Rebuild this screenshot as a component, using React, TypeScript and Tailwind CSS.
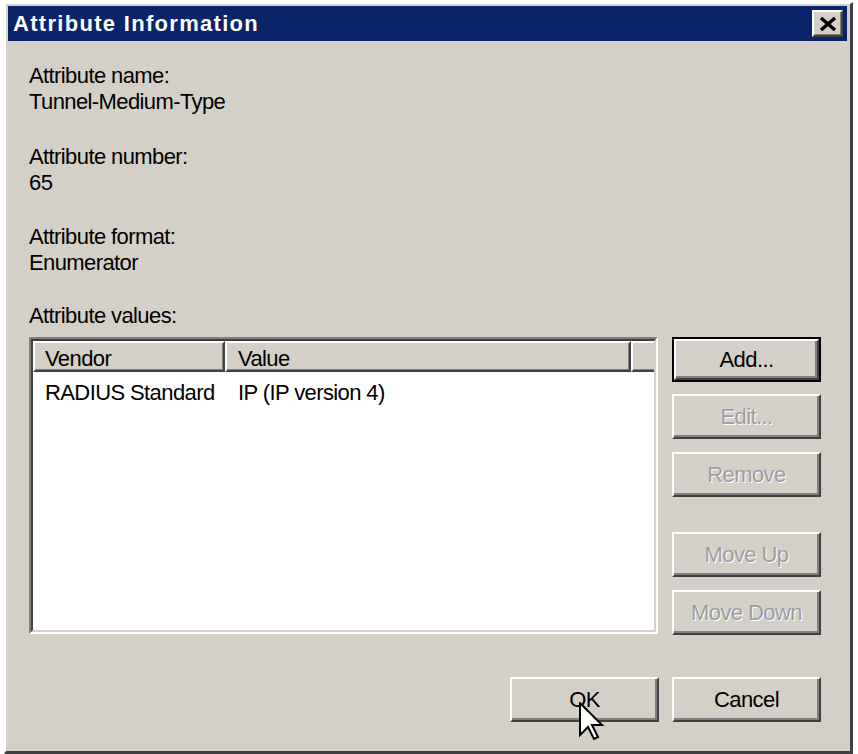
import React from 'react';

const font = "font-['Liberation_Sans',Arial,sans-serif]";

function Btn({
  label,
  disabled = false,
  isDefault = false,
}: {
  label: string;
  disabled?: boolean;
  isDefault?: boolean;
}) {
  const face = (
    <div className="flex-1 flex items-center justify-center border-t-2 border-l-2 border-t-white border-l-white border-r-2 border-b-2 border-r-[#404040] border-b-[#404040] shadow-[inset_-2px_-2px_0_#808080] bg-[#d4d0c8]">
      <span
        className={
          disabled
            ? 'text-[#9c9ca4] [text-shadow:1px_1px_0_#ffffff]'
            : 'text-black'
        }
      >
        {label}
      </span>
    </div>
  );
  if (isDefault) {
    return (
      <div className="w-[149px] h-[45px] flex border-2 border-black">{face}</div>
    );
  }
  return <div className="w-[149px] h-[45px] flex">{face}</div>;
}

function Cursor() {
  return (
    <svg
      width="26"
      height="40"
      viewBox="0 0 13 20"
      className="absolute left-[579px] top-[702px]"
    >
      <path
        d="M0.5 0.5 L0.5 16.5 L4.5 12.5 L7.5 18.5 L9.5 17.5 L6.5 11.5 L11.5 11.5 Z"
        fill="#ffffff"
        stroke="#000000"
        strokeWidth="1"
        strokeLinejoin="miter"
      />
    </svg>
  );
}

export default function App() {
  return (
    <div className={`relative w-[858px] h-[754px] bg-white overflow-hidden ${font} text-[22px] tracking-[-0.6px] text-black`}>
      {/* Dialog window */}
      <div className="ml-[4px] mt-[2px] w-[849px] h-[752px] bg-[#d4d0c8] border-t-2 border-l-2 border-t-white border-l-white border-r-[3px] border-b-[3px] border-r-[#404040] border-b-[#404040] flex flex-col">
        {/* Title bar */}
        <div className="mt-[2px] ml-[2px] mr-[3px] h-[35px] bg-[#0a246a] flex items-center justify-between pl-[5px] pr-[4px]">
          <span className="font-bold text-white text-[22px] tracking-[1.3px]">
            Attribute Information
          </span>
          <div className="w-[31px] h-[27px] flex bg-[#d4d0c8] border-t-2 border-l-2 border-t-white border-l-white border-r-2 border-b-2 border-r-[#404040] border-b-[#404040] shadow-[inset_-1px_-1px_0_#808080]">
            <div className="flex-1 flex items-center justify-center pt-[1px]">
              <svg width="18" height="14" viewBox="0 0 18 14">
                <path d="M2 1 L16 13 M16 1 L2 13" stroke="#000" strokeWidth="3.4" />
              </svg>
            </div>
          </div>
        </div>

        {/* Body */}
        <div className="flex flex-col pt-[22px] pl-[23px] pr-[29px] leading-[26px]">
          <div className="mb-[29px]">
            <div>Attribute name:</div>
            <div>Tunnel-Medium-Type</div>
          </div>
          <div className="mb-[28px]">
            <div>Attribute number:</div>
            <div>65</div>
          </div>
          <div className="mb-[27px]">
            <div>Attribute format:</div>
            <div>Enumerator</div>
          </div>
          <div>Attribute values:</div>

          <div className="flex gap-[14px] mt-[8px]">
            {/* List view */}
            <div className="w-[629px] h-[297px] flex border-2 border-t-[#808080] border-l-[#808080] border-r-white border-b-white">
              <div className="flex-1 flex flex-col bg-white border-2 border-t-[#404040] border-l-[#404040] border-r-[#d4d0c8] border-b-[#d4d0c8]">
                <div className="h-[31px] flex bg-[#d4d0c8]">
                  <div className="w-[192px] pl-[10px] pt-[3px] border-t-2 border-l-2 border-t-white border-l-white border-r-2 border-b-2 border-r-[#404040] border-b-[#404040] shadow-[inset_-1px_-1px_0_#808080]">
                    Vendor
                  </div>
                  <div className="w-[406px] pl-[11px] pt-[3px] border-t-2 border-l-2 border-t-white border-l-white border-r-2 border-b-2 border-r-[#404040] border-b-[#404040] shadow-[inset_-1px_-1px_0_#808080]">
                    Value
                  </div>
                  <div className="flex-1 border-t-2 border-l-2 border-t-white border-l-white border-b-2 border-b-[#404040] shadow-[inset_0_-1px_0_#808080]" />
                </div>
                <div className="flex pt-[8px]">
                  <div className="w-[192px] pl-[12px] whitespace-nowrap">RADIUS Standard</div>
                  <div className="pl-[13px] whitespace-nowrap">IP (IP version 4)</div>
                </div>
              </div>
            </div>

            {/* Side buttons */}
            <div className="flex flex-col w-[149px]">
              <Btn label="Add..." isDefault />
              <div className="mt-[12px]">
                <Btn label="Edit..." disabled />
              </div>
              <div className="mt-[13px]">
                <Btn label="Remove" disabled />
              </div>
              <div className="mt-[35px]">
                <Btn label="Move Up" disabled />
              </div>
              <div className="mt-[13px]">
                <Btn label="Move Down" disabled />
              </div>
            </div>
          </div>

          {/* Bottom buttons */}
          <div className="flex justify-end gap-[13px] mt-[42px]">
            <Btn label="OK" />
            <Btn label="Cancel" />
          </div>
        </div>
      </div>

      <Cursor />
    </div>
  );
}
